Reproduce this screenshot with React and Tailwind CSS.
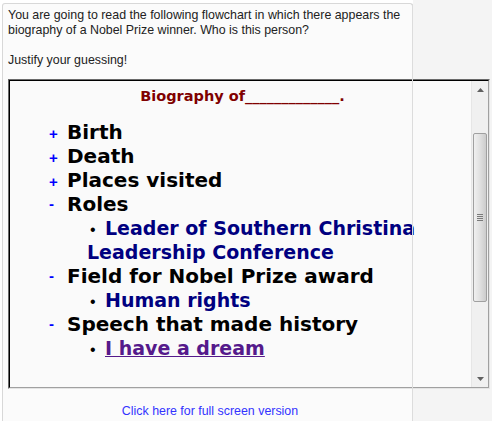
import React from "react";

const items = [
    { sign: "+", label: "Birth" },
    { sign: "+", label: "Death" },
    { sign: "+", label: "Places visited" },
    { sign: "-", label: "Roles", subs: [{ lines: ["Leader of Southern Christina", "Leadership Conference"] }] },
    { sign: "-", label: "Field for Nobel Prize award", subs: [{ lines: ["Human rights"] }] },
    { sign: "-", label: "Speech that made history", subs: [{ lines: ["I have a dream"], link: true }] },
];

const Marker = ({ sign }) => (
    <span className="inline-block w-[19px] pl-[1px] text-[15px] leading-none font-bold text-[#0000ff] font-['Liberation_Sans',sans-serif]">
        {sign === "+" ? "+" : <span className="relative -top-[2px]">-</span>}
    </span>
);

const ScrollBar = () => (
    <div className="flex w-[17px] shrink-0 flex-col border-l border-[#e6e6e6] bg-[#f0f0f0]">
        <div className="flex h-[17px] items-center justify-center">
            <svg width="7" height="4" viewBox="0 0 7 4"><path d="M0 4 L3.5 0 L7 4 Z" fill="#606060" /></svg>
        </div>
        <div className="h-[35px]" />
        <div className="mx-[1px] flex h-[169px] items-center justify-center rounded-[2px] border border-[#a0a0a0] bg-gradient-to-r from-[#f0f0f0] via-[#e0e0e0] to-[#cccccc]">
            <div className="flex flex-col gap-[1px]">
                <div className="h-px w-[6px] bg-[#7a7a7a]" />
                <div className="h-px w-[6px] bg-[#7a7a7a]" />
                <div className="h-px w-[6px] bg-[#7a7a7a]" />
                <div className="h-px w-[6px] bg-[#7a7a7a]" />
            </div>
        </div>
        <div className="flex-1" />
        <div className="flex h-[17px] items-center justify-center">
            <svg width="7" height="4" viewBox="0 0 7 4"><path d="M0 0 L3.5 4 L7 0 Z" fill="#606060" /></svg>
        </div>
    </div>
);

const Flowchart = () => (
    <div className="mt-[11px] h-[310px] w-[482px] border border-t-[#6a6a6a] border-l-[#6a6a6a] border-b-[#e4e4e4] border-r-[#e4e4e4]">
        <div className="flex h-full w-full border border-t-black border-l-black border-b-[#a0a0a0] border-r-[#a0a0a0] bg-[#fafafa]">
            <div className="flex-1 font-['DejaVu_Sans',Verdana,sans-serif] font-bold">
                <h2 className="mt-[6px] pl-[4px] text-center text-[14.5px] leading-[18px] text-[#800000]">
                    Biography of_____________.
                </h2>
                <ul className="mt-[15px] pl-[38px]">
                    {items.map((item, i) => (
                        <li key={i} className="whitespace-nowrap">
                            <div className="text-[20px] leading-[24px] text-black">
                                <Marker sign={item.sign} />
                                {item.label}
                            </div>
                            {item.subs && item.subs.map((sub, j) => (
                                <div key={j} className="ml-[39px] text-[19px] leading-[24px] text-[#000080]">
                                    <span className="inline-block w-[18px] pl-[3px] text-[16px] leading-none font-normal text-black font-['Liberation_Sans',sans-serif]">•</span>
                                    {sub.lines.map((line, k) => (
                                        <React.Fragment key={k}>
                                            {k > 0 && <br />}
                                            {sub.link ? <span className="text-[#551a8b] underline">{line}</span> : line}
                                        </React.Fragment>
                                    ))}
                                </div>
                            ))}
                        </li>
                    ))}
                </ul>
            </div>
            <ScrollBar />
        </div>
    </div>
);

export default function App() {
    return (
        <div className="flex h-[429px] w-[500px] items-start bg-white font-['Liberation_Sans',Arial,sans-serif]">
            <div className="relative z-10 ml-[2px] mt-[3px] h-[418px] w-[411px] rounded-t-[3px] border border-b-0 border-[#d8d8d8] bg-[#fbfbfb] pl-[5px] pt-[4px]">
                <p className="text-[12.4px] leading-[15px] text-[#222]">
                    You are going to read the following flowchart in which there appears the
                    <br />
                    biography of a Nobel Prize winner. Who is this person?
                </p>
                <p className="mt-[15px] text-[12.4px] leading-[15px] text-[#222]">Justify your guessing!</p>
                <Flowchart />
                <div className="mt-[15px] text-center text-[12.4px] leading-[15px]">
                    <a className="text-[#3333ff]" href="#">Click here for full screen version</a>
                </div>
                <div className="absolute -right-px top-0 bottom-0 w-px bg-[#dcdcdc]" />
            </div>
            <div className="h-[421px] w-[79px] bg-[#f4f4f4]" />
        </div>
    );
}
